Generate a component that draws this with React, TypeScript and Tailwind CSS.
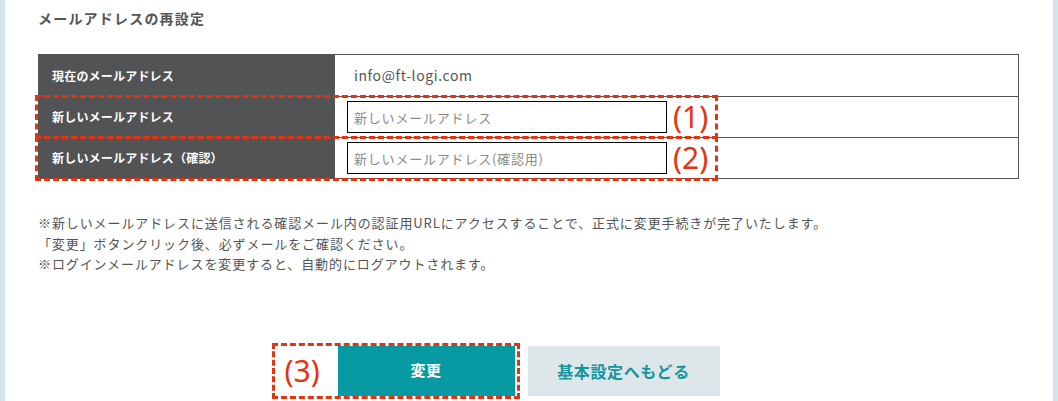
const jp = "font-['Noto_Sans_CJK_JP','Noto_Sans',sans-serif]";

const rows = [
  { label: "現在のメールアドレス", value: "info@ft-logi.com" },
  { label: "新しいメールアドレス", placeholder: "新しいメールアドレス" },
  { label: "新しいメールアドレス（確認）", placeholder: "新しいメールアドレス(確認用)" },
];

export default function App() {
  return (
    <div className={`flex w-[1058px] h-[401px] overflow-hidden bg-white ${jp}`}>
      <div className="w-[5px] shrink-0 bg-[#d1e7ed]" />
      <div className="flex-1 pl-[33px] pr-[34px] pt-[6px]">
        <h2 className="text-[14px] font-bold leading-[24px] tracking-[1.2px] text-[#555]">メールアドレスの再設定</h2>

        <div className="relative mt-[24px]">
          <div className="border border-[#555]">
            {rows.map((row, i) => (
              <div key={i} className={`flex h-[41px] ${i > 0 ? "border-t border-[#555]" : ""}`}>
                <div className="flex w-[295px] shrink-0 items-center bg-[#525355] pl-[13px] text-[12px] font-bold tracking-[0.2px] text-white">
                  {row.label}
                </div>
                <div className="flex flex-1 items-center border-l border-[#555] pl-[12px]">
                  {row.value ? (
                    <span className="pl-[7px] text-[14px] tracking-[0.6px] text-[#555]">{row.value}</span>
                  ) : (
                    <div className="flex items-center">
                      <input
                        placeholder={row.placeholder}
                        className="h-[32px] w-[320px] border border-black px-[6px] text-[13px] tracking-[0.8px] outline-none placeholder:text-[#8a8a8a]"
                      />
                      <span className="ml-[6px] font-['Noto_Sans',sans-serif] text-[30px] leading-none text-[#e5330f]">
                        ({i})
                      </span>
                    </div>
                  )}
                </div>
              </div>
            ))}
          </div>
          {/* 注釈の点線枠 */}
          <div className="pointer-events-none absolute left-[-3px] top-[41px] w-[683px]">
            <div className="h-[44px] border-[3px] border-dashed border-[#e5330f]" />
            <div className="mt-[-3px] h-[45px] border-[3px] border-dashed border-[#e5330f]" />
          </div>
        </div>

        <div className="mt-[34px] text-[13px] leading-[20.5px] tracking-[0.9px] text-[#555]">
          <p>※新しいメールアドレスに送信される確認メール内の認証用URLにアクセスすることで、正式に変更手続きが完了いたします。</p>
          <p>「変更」ボタンクリック後、必ずメールをご確認ください。</p>
          <p>※ログインメールアドレスを変更すると、自動的にログアウトされます。</p>
        </div>

        <div className="mt-[71px] flex justify-center gap-[13px]">
          <div className="relative">
            <button className="h-[50px] w-[177px] bg-[#079aa2] text-[15px] font-bold tracking-[0.5px] text-white">変更</button>
            <div className="pointer-events-none absolute left-[-66px] top-[-3px] flex h-[56px] w-[248px] items-center border-[3px] border-dashed border-[#e5330f] pl-[10px]">
              <span className="font-['Noto_Sans',sans-serif] text-[30px] leading-none text-[#e5330f]">(3)</span>
            </div>
          </div>
          <button className="h-[50px] w-[192px] bg-[#dde6e8] text-[16px] font-bold tracking-[0.6px] text-[#16959d]">基本設定へもどる</button>
        </div>
      </div>
      <div className="w-[5px] shrink-0 bg-[#d1e7ed]" />
    </div>
  );
}
